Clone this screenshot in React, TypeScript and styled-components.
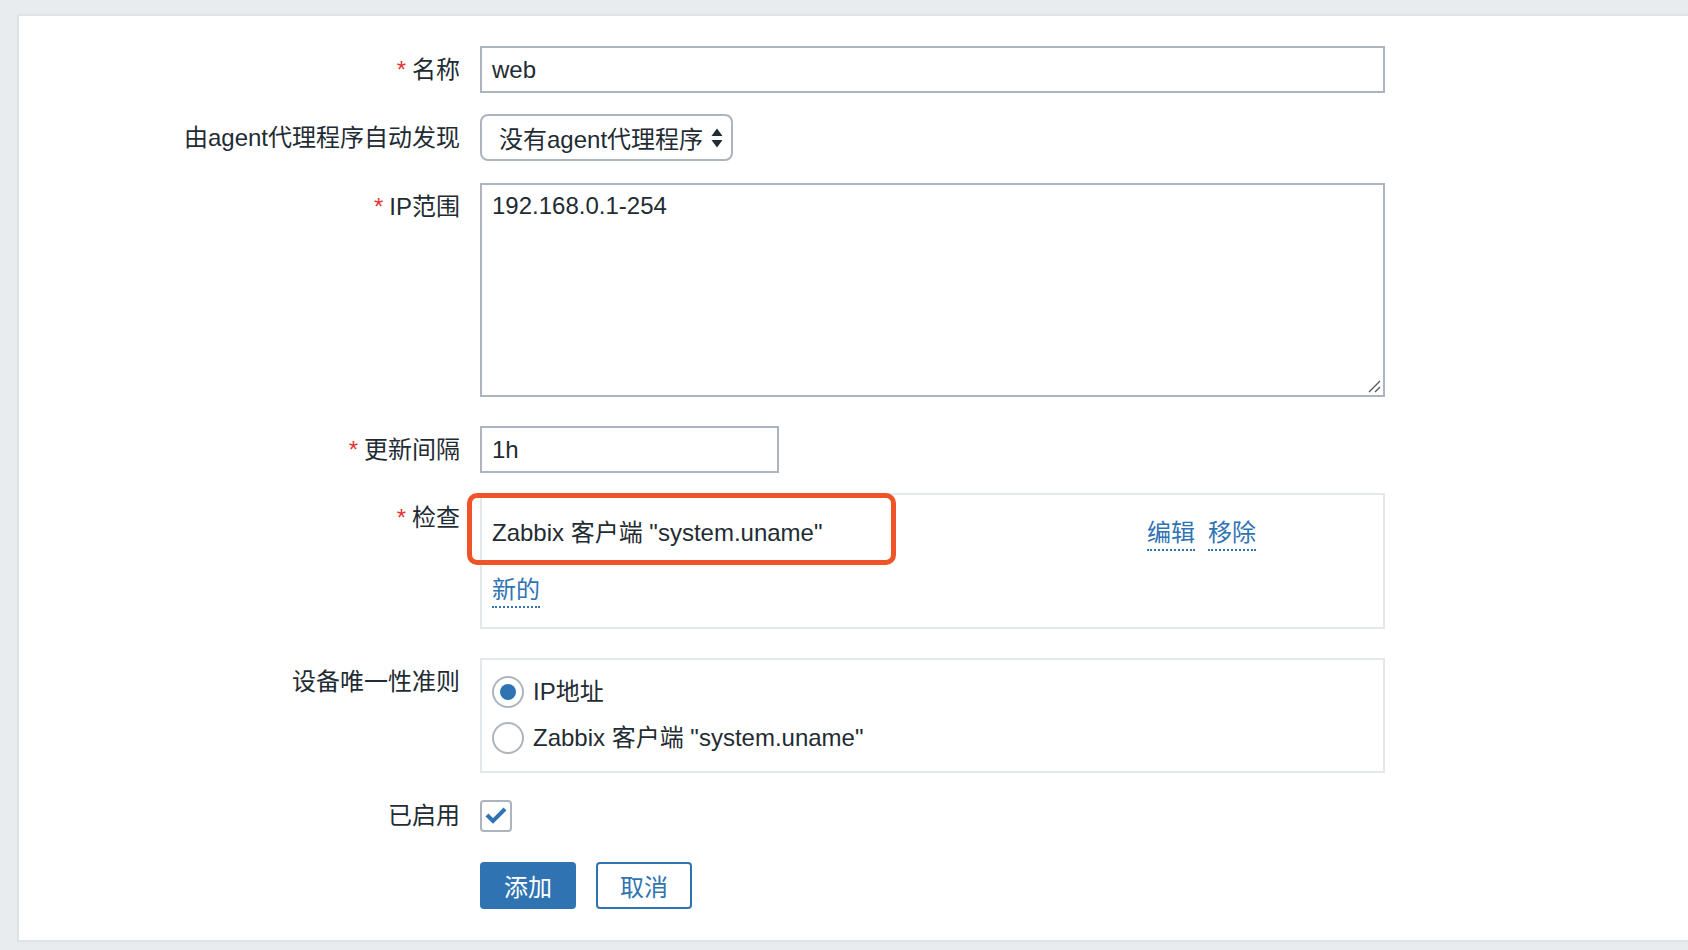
import React from "react";
import styled, { createGlobalStyle } from "styled-components";

const GlobalStyle = createGlobalStyle`
  html, body {
    margin: 0;
    padding: 0;
    background: #e9ecef;
    overflow: hidden;
  }
  body {
    font-family: "Liberation Sans", "Noto Sans CJK SC", sans-serif;
    color: #1f2c33;
  }
  * { box-sizing: border-box; }
`;

const BLUE = "#3073b3";
const FIELD_BORDER = "#acb5bd";
const BOX_BORDER = "#e4e8eb";

const Page = styled.div`
  width: 1688px;
  height: 950px;
  padding: 14px 0 0 17px;
`;

const Panel = styled.div`
  background: #ffffff;
  border: 2px solid #dee3e7;
  border-right: none;
  height: 928px;
  padding-top: 30px;
  display: flex;
  flex-direction: column;
  font-size: 24px;
`;

const Row = styled.div<{ $mt?: number; $center?: boolean }>`
  display: grid;
  grid-template-columns: 441px 905px;
  column-gap: 20px;
  align-items: ${(p) => (p.$center ? "center" : "start")};
  margin-top: ${(p) => p.$mt ?? 0}px;
`;

const Label = styled.div<{ $lh?: number }>`
  text-align: right;
  line-height: ${(p) => p.$lh ?? 47}px;
  white-space: nowrap;
  color: #1f2c33;
`;

const Asterisk = styled.span`
  color: #e33734;
  margin-right: 6px;
`;

const TextBox = styled.div<{ $width?: number }>`
  width: ${(p) => (p.$width ? `${p.$width}px` : "100%")};
  height: 47px;
  border: 2px solid ${FIELD_BORDER};
  padding: 0 10px;
  line-height: 43px;
  background: #fff;
`;

const Select = styled.div`
  width: 253px;
  height: 47px;
  border: 2px solid ${FIELD_BORDER};
  border-radius: 8px;
  padding: 0 8px 0 17px;
  display: flex;
  align-items: center;
  justify-content: space-between;
  background: #fff;
`;

const TextArea = styled.div`
  position: relative;
  width: 100%;
  height: 214px;
  border: 2px solid ${FIELD_BORDER};
  padding: 9px 10px;
  line-height: 24px;
  background: #fff;
`;

const Resizer = styled.svg`
  position: absolute;
  right: 2px;
  bottom: 2px;
`;

const Box = styled.div<{ $pad: string }>`
  position: relative;
  width: 100%;
  border: 2px solid ${BOX_BORDER};
  padding: ${(p) => p.$pad};
  background: #fff;
`;

const CheckTable = styled.div`
  display: flex;
  flex-direction: column;
  gap: 27px;
`;

const CheckLine = styled.div`
  display: grid;
  grid-template-columns: 655px auto;
  align-items: start;
  line-height: 24px;
  height: 30px;
`;

const Actions = styled.div`
  display: flex;
  gap: 13px;
`;

const Link = styled.a`
  display: inline-block;
  color: ${BLUE};
  line-height: 24px;
  padding-bottom: 4px;
  border-bottom: 2px dotted ${BLUE};
  text-decoration: none;
  cursor: pointer;
`;

const Highlight = styled.div`
  position: absolute;
  left: -15px;
  top: -2px;
  width: 429px;
  height: 72px;
  border: 5px solid #ee5428;
  border-radius: 10px;
  pointer-events: none;
`;

const RadioList = styled.div`
  display: flex;
  flex-direction: column;
  gap: 14px;
`;

const RadioRow = styled.div`
  display: flex;
  align-items: center;
  gap: 9px;
  line-height: 32px;
`;

const RadioCircle = styled.span<{ $checked?: boolean }>`
  width: 32px;
  height: 32px;
  border-radius: 50%;
  border: 2px solid ${FIELD_BORDER};
  background: #fff;
  display: flex;
  align-items: center;
  justify-content: center;
  flex: none;
  &::after {
    content: "";
    width: 16px;
    height: 16px;
    border-radius: 50%;
    background: ${(p) => (p.$checked ? BLUE : "transparent")};
  }
`;

const CheckBox = styled.span`
  width: 32px;
  height: 32px;
  border: 2px solid ${FIELD_BORDER};
  border-radius: 4px;
  display: flex;
  align-items: center;
  justify-content: center;
  background: #fff;
`;

const Buttons = styled.div`
  display: flex;
  gap: 20px;
`;

const Button = styled.button<{ $primary?: boolean }>`
  width: 96px;
  height: 47px;
  border-radius: 4px;
  border: 2px solid ${BLUE};
  background: ${(p) => (p.$primary ? BLUE : "#fff")};
  color: ${(p) => (p.$primary ? "#fff" : BLUE)};
  font-family: "Liberation Sans", "Noto Sans CJK SC", sans-serif;
  font-size: 24px;
  padding: 0;
  cursor: pointer;
`;

const SelectArrows = () => (
  <svg width="12" height="20" viewBox="0 0 12 20">
    <polygon points="0.5,8 6,0.5 11.5,8" fill="#1f2c33" />
    <polygon points="0.5,12 11.5,12 6,19.5" fill="#1f2c33" />
  </svg>
);

export default function App() {
  return (
    <>
      <GlobalStyle />
      <Page>
        <Panel>
          <Row>
            <Label>
              <Asterisk>*</Asterisk>名称
            </Label>
            <TextBox>web</TextBox>
          </Row>

          <Row $mt={21}>
            <Label>由agent代理程序自动发现</Label>
            <Select>
              <span>没有agent代理程序</span>
              <SelectArrows />
            </Select>
          </Row>

          <Row $mt={22}>
            <Label>
              <Asterisk>*</Asterisk>IP范围
            </Label>
            <TextArea>
              192.168.0.1-254
              <Resizer width="14" height="14" viewBox="0 0 14 14">
                <line x1="13" y1="2" x2="2" y2="13" stroke="#555" strokeWidth="1.2" />
                <line x1="13" y1="8" x2="8" y2="13" stroke="#555" strokeWidth="1.2" />
              </Resizer>
            </TextArea>
          </Row>

          <Row $mt={29}>
            <Label>
              <Asterisk>*</Asterisk>更新间隔
            </Label>
            <TextBox $width={299}>1h</TextBox>
          </Row>

          <Row $mt={20}>
            <Label $lh={50}>
              <Asterisk>*</Asterisk>检查
            </Label>
            <Box $pad="26px 10px 19px">
              <CheckTable>
                <CheckLine>
                  <span>Zabbix 客户端 "system.uname"</span>
                  <Actions>
                    <Link>编辑</Link>
                    <Link>移除</Link>
                  </Actions>
                </CheckLine>
                <CheckLine>
                  <span>
                    <Link>新的</Link>
                  </span>
                </CheckLine>
              </CheckTable>
              <Highlight />
            </Box>
          </Row>

          <Row $mt={29}>
            <Label>设备唯一性准则</Label>
            <Box $pad="16px 10px 17px">
              <RadioList>
                <RadioRow>
                  <RadioCircle $checked />
                  <span>IP地址</span>
                </RadioRow>
                <RadioRow>
                  <RadioCircle />
                  <span>Zabbix 客户端 "system.uname"</span>
                </RadioRow>
              </RadioList>
            </Box>
          </Row>

          <Row $mt={27} $center>
            <Label $lh={32}>已启用</Label>
            <CheckBox>
              <svg width="22" height="18" viewBox="0 0 22 18">
                <polyline
                  points="2,8 8,14 20,2"
                  fill="none"
                  stroke={BLUE}
                  strokeWidth="4"
                />
              </svg>
            </CheckBox>
          </Row>

          <Row $mt={30}>
            <span />
            <Buttons>
              <Button $primary>添加</Button>
              <Button>取消</Button>
            </Buttons>
          </Row>
        </Panel>
      </Page>
    </>
  );
}
